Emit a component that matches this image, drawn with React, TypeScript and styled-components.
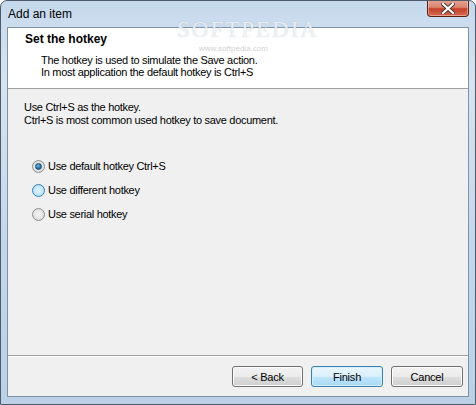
import React from "react";
import styled, { createGlobalStyle } from "styled-components";

const Global = createGlobalStyle`
  html, body { margin: 0; padding: 0; background: #ffffff; }
  body { font-family: "Liberation Sans", Arial, sans-serif; }
`;

const Window = styled.div`
  position: relative;
  box-sizing: border-box;
  width: 476px;
  height: 405px;
  border: 1px solid #4c5a6a;
  border-radius: 7px 7px 0 0;
  background: linear-gradient(180deg, #c6d9ec 0%, #d6e4f0 20%, #c4d7ea 60%, #bcd1e6 100%);
  display: flex;
  flex-direction: column;
  overflow: hidden;
`;

const TitleBar = styled.div`
  height: 26px;
  display: flex;
  align-items: flex-start;
  justify-content: space-between;
  padding-left: 7px;
`;

const Title = styled.div`
  font-family: "Liberation Sans", Arial, sans-serif;
  font-size: 12px;
  color: #000;
  padding-top: 6px;
`;

const CloseButton = styled.div`
  width: 42px;
  height: 17px;
  margin-right: 6px;
  margin-top: -1px;
  box-sizing: border-box;
  border: 1px solid #5a2018;
  border-top: none;
  border-radius: 0 0 4px 4px;
  background: linear-gradient(180deg, #e6a594 0%, #d88570 45%, #c5422c 55%, #d46a50 100%);
  box-shadow: inset 0 0 0 1px rgba(255, 220, 210, 0.5);
  display: flex;
  align-items: center;
  justify-content: center;
`;

const Client = styled.div`
  flex: 1;
  margin: 0 6px 7px 6px;
  border: 1px solid #7f93a8;
  background: #f0f0f0;
  display: flex;
  flex-direction: column;
  letter-spacing: -0.3px;
`;

const Header = styled.div`
  height: 61px;
  background: #ffffff;
  border-bottom: 1px solid #a0a0a0;
  padding: 3px 0 0 17px;
  box-sizing: border-box;
`;

const HeaderTitle = styled.div`
  font-size: 12px;
  font-weight: bold;
  color: #000;
  line-height: 16px;
  letter-spacing: 0;
`;

const HeaderText = styled.div`
  font-size: 11px;
  line-height: 12px;
  color: #000;
  margin-top: 7px;
  padding-left: 16px;
`;

const Body = styled.div`
  flex: 1;
  padding: 12px 0 0 16px;
  font-size: 11px;
  line-height: 13px;
  color: #000;
`;

const Options = styled.div`
  margin-top: 33px;
  padding-left: 8px;
  display: flex;
  flex-direction: column;
  gap: 11px;
`;

const OptionRow = styled.label`
  display: flex;
  align-items: center;
  gap: 3px;
  font-size: 11px;
  height: 13px;
`;

const Radio = styled.span<{ $checked?: boolean; $hover?: boolean }>`
  width: 13px;
  height: 13px;
  box-sizing: border-box;
  border-radius: 50%;
  border: 1px solid ${(p) => (p.$hover ? "#3c7fb1" : "#8e8f8f")};
  background: ${(p) =>
    p.$hover
      ? "radial-gradient(circle at 50% 50%, #e8f6fd 0%, #bfe6fb 55%, #a7d9f5 100%)"
      : "radial-gradient(circle at 50% 50%, #f6f6f6 0%, #e4e4e4 55%, #d0d0d0 100%)"};
  display: flex;
  align-items: center;
  justify-content: center;
  &::after {
    content: "";
    display: ${(p) => (p.$checked ? "block" : "none")};
    width: 5px;
    height: 5px;
    border-radius: 50%;
    background: radial-gradient(circle at 40% 35%, #6ac0ee 0%, #1d5d95 70%, #0e3f6e 100%);
    border: 1px solid #1c4f7e;
  }
`;

const Divider = styled.div`
  border-top: 1px solid #a0a0a0;
  border-bottom: 1px solid #ffffff;
`;

const Footer = styled.div`
  height: 39px;
  display: flex;
  justify-content: flex-end;
  align-items: flex-start;
  padding: 9px 5px 0 0;
  box-sizing: border-box;
  gap: 8px;
`;

const Button = styled.button<{ $default?: boolean; $width: number }>`
  width: ${(p) => p.$width}px;
  height: 21px;
  margin: 0;
  padding: 0;
  font-family: "Liberation Sans", Arial, sans-serif;
  font-size: 11px;
  letter-spacing: -0.2px;
  color: #000;
  border-radius: 3px;
  border: 1px solid ${(p) => (p.$default ? "#3c7fb1" : "#707070")};
  background: ${(p) =>
    p.$default
      ? "linear-gradient(180deg, #eaf6fd 0%, #d9f0fc 50%, #bee6fd 51%, #a7d9f5 100%)"
      : "linear-gradient(180deg, #f2f2f2 0%, #ebebeb 50%, #dddddd 51%, #cfcfcf 100%)"};
  box-shadow: inset 0 0 0 1px ${(p) => (p.$default ? "#d6effc" : "#fcfcfc")};
`;

const Watermark = styled.div`
  position: absolute;
  left: 176px;
  top: 17px;
  font-family: "Liberation Serif", serif;
  font-size: 23px;
  line-height: 24px;
  letter-spacing: 2px;
  color: rgba(255, 255, 255, 0.75);
  text-shadow: 0 0 1px rgba(120, 140, 160, 0.5);
  pointer-events: none;
`;

const WatermarkSmall = styled.div`
  position: absolute;
  left: 198px;
  top: 44px;
  font-family: "Liberation Sans", sans-serif;
  font-size: 8px;
  line-height: 8px;
  color: rgba(160, 160, 160, 0.5);
  pointer-events: none;
`;

export default function App() {
  return (
    <>
      <Global />
      <Window>
        <TitleBar>
          <Title>Add an item</Title>
          <CloseButton>
            <svg width="14" height="11" viewBox="0 0 14 11">
              <path
                d="M2 1 L12 10 M12 1 L2 10"
                stroke="#4a3030"
                strokeWidth="4"
                strokeLinecap="square"
              />
              <path
                d="M2 1 L12 10 M12 1 L2 10"
                stroke="#ffffff"
                strokeWidth="2.2"
                strokeLinecap="square"
              />
            </svg>
          </CloseButton>
        </TitleBar>
        <Client>
          <Header>
            <HeaderTitle>Set the hotkey</HeaderTitle>
            <HeaderText>
              The hotkey is used to simulate the Save action.
              <br />
              In most application the default hotkey is Ctrl+S
            </HeaderText>
          </Header>
          <Body>
            <div>Use Ctrl+S as the hotkey.</div>
            <div>Ctrl+S is most common used hotkey to save document.</div>
            <Options>
              <OptionRow>
                <Radio $checked />
                Use default hotkey Ctrl+S
              </OptionRow>
              <OptionRow>
                <Radio $hover />
                Use different hotkey
              </OptionRow>
              <OptionRow>
                <Radio />
                Use serial hotkey
              </OptionRow>
            </Options>
          </Body>
          <Divider />
          <Footer>
            <Button $width={71}>&lt; Back</Button>
            <Button $width={72} $default>
              Finish
            </Button>
            <Button $width={72}>Cancel</Button>
          </Footer>
        </Client>
        <Watermark>SOFTPEDIA</Watermark>
        <WatermarkSmall>www.softpedia.com</WatermarkSmall>
      </Window>
    </>
  );
}
